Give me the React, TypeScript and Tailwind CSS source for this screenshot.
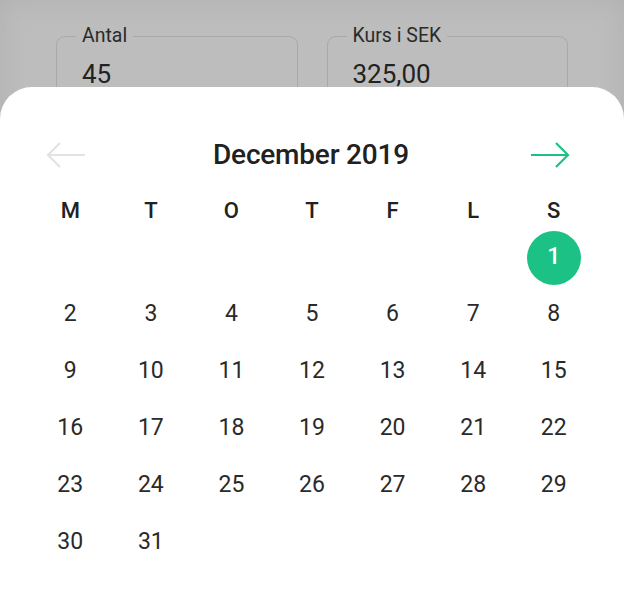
import { ReactNode } from 'react'

const weekdays = ['M', 'T', 'O', 'T', 'F', 'L', 'S']

// December 2019 starts on a Sunday, so six empty cells first
const cells: (number | null)[] = [
  ...Array(6).fill(null),
  ...Array.from({ length: 31 }, (_, i) => i + 1),
]

function Field({ label, value }: { label: string; value: string }) {
  return (
    <fieldset className="flex-1 h-[80px] border-[1.5px] border-[#a9a9a9] rounded-[9px] px-[25px]">
      <legend className="px-[6px] -ml-[6px] text-[19.5px] leading-[22px] text-[#2b2b2b]">
        {label}
      </legend>
      <div className="mt-[12px] text-[26px] leading-[30px] text-[#222]">{value}</div>
    </fieldset>
  )
}

function Arrow({ dir, color }: { dir: 'left' | 'right'; color: string }) {
  return (
    <svg width="40" height="28" viewBox="0 0 40 28" fill="none" stroke={color} strokeWidth="2.2">
      {dir === 'left' ? (
        <>
          <path d="M39 14H2" />
          <path d="M14 2L2 14l12 12" />
        </>
      ) : (
        <>
          <path d="M1 14h37" />
          <path d="M26 2l12 12-12 12" />
        </>
      )}
    </svg>
  )
}

function Cell({ children }: { children: ReactNode }) {
  return <div className="h-[57px] flex items-center justify-center">{children}</div>
}

export default function App() {
  return (
    <div
      className="relative w-[624px] h-[600px] overflow-hidden bg-[#bdbdbd] shadow-[inset_0_0_30px_rgba(0,0,0,0.07)]"
      style={{ fontFamily: 'Roboto, "Noto Sans", sans-serif' }}
    >
      {/* page behind the sheet */}
      <div className="flex gap-[29px] px-[56px] pt-[25px]">
        <Field label="Antal" value="45" />
        <Field label="Kurs i SEK" value="325,00" />
      </div>

      {/* bottom sheet */}
      <div className="absolute left-0 right-0 top-[87px] bottom-0 bg-white rounded-t-[32px]">
        <div className="flex items-center pl-[46px] pr-[54px] mt-[48px] h-[40px]">
          <Arrow dir="left" color="#e3e3e3" />
          <div className="flex-1 text-center pl-[6px] text-[28px] font-medium text-[#212121] tracking-[-0.2px]">
            December 2019
          </div>
          <Arrow dir="right" color="#1cc285" />
        </div>

        <div className="grid grid-cols-7 px-[30px] mt-[20px]">
          {weekdays.map((d, i) => (
            <div key={i} className="h-[30px] flex items-center justify-center text-[22px] font-medium text-[#212121]">
              {d}
            </div>
          ))}
        </div>

        <div className="grid grid-cols-7 px-[30px] mt-[4px] text-[23px] text-[#2a2a2a]">
          {cells.map((n, i) => (
            <Cell key={i}>
              {n === 1 ? (
                <div className="w-[54px] h-[54px] rounded-full bg-[#1cc285] text-white font-medium flex items-center justify-center">
                  1
                </div>
              ) : (
                n
              )}
            </Cell>
          ))}
        </div>
      </div>
    </div>
  )
}
